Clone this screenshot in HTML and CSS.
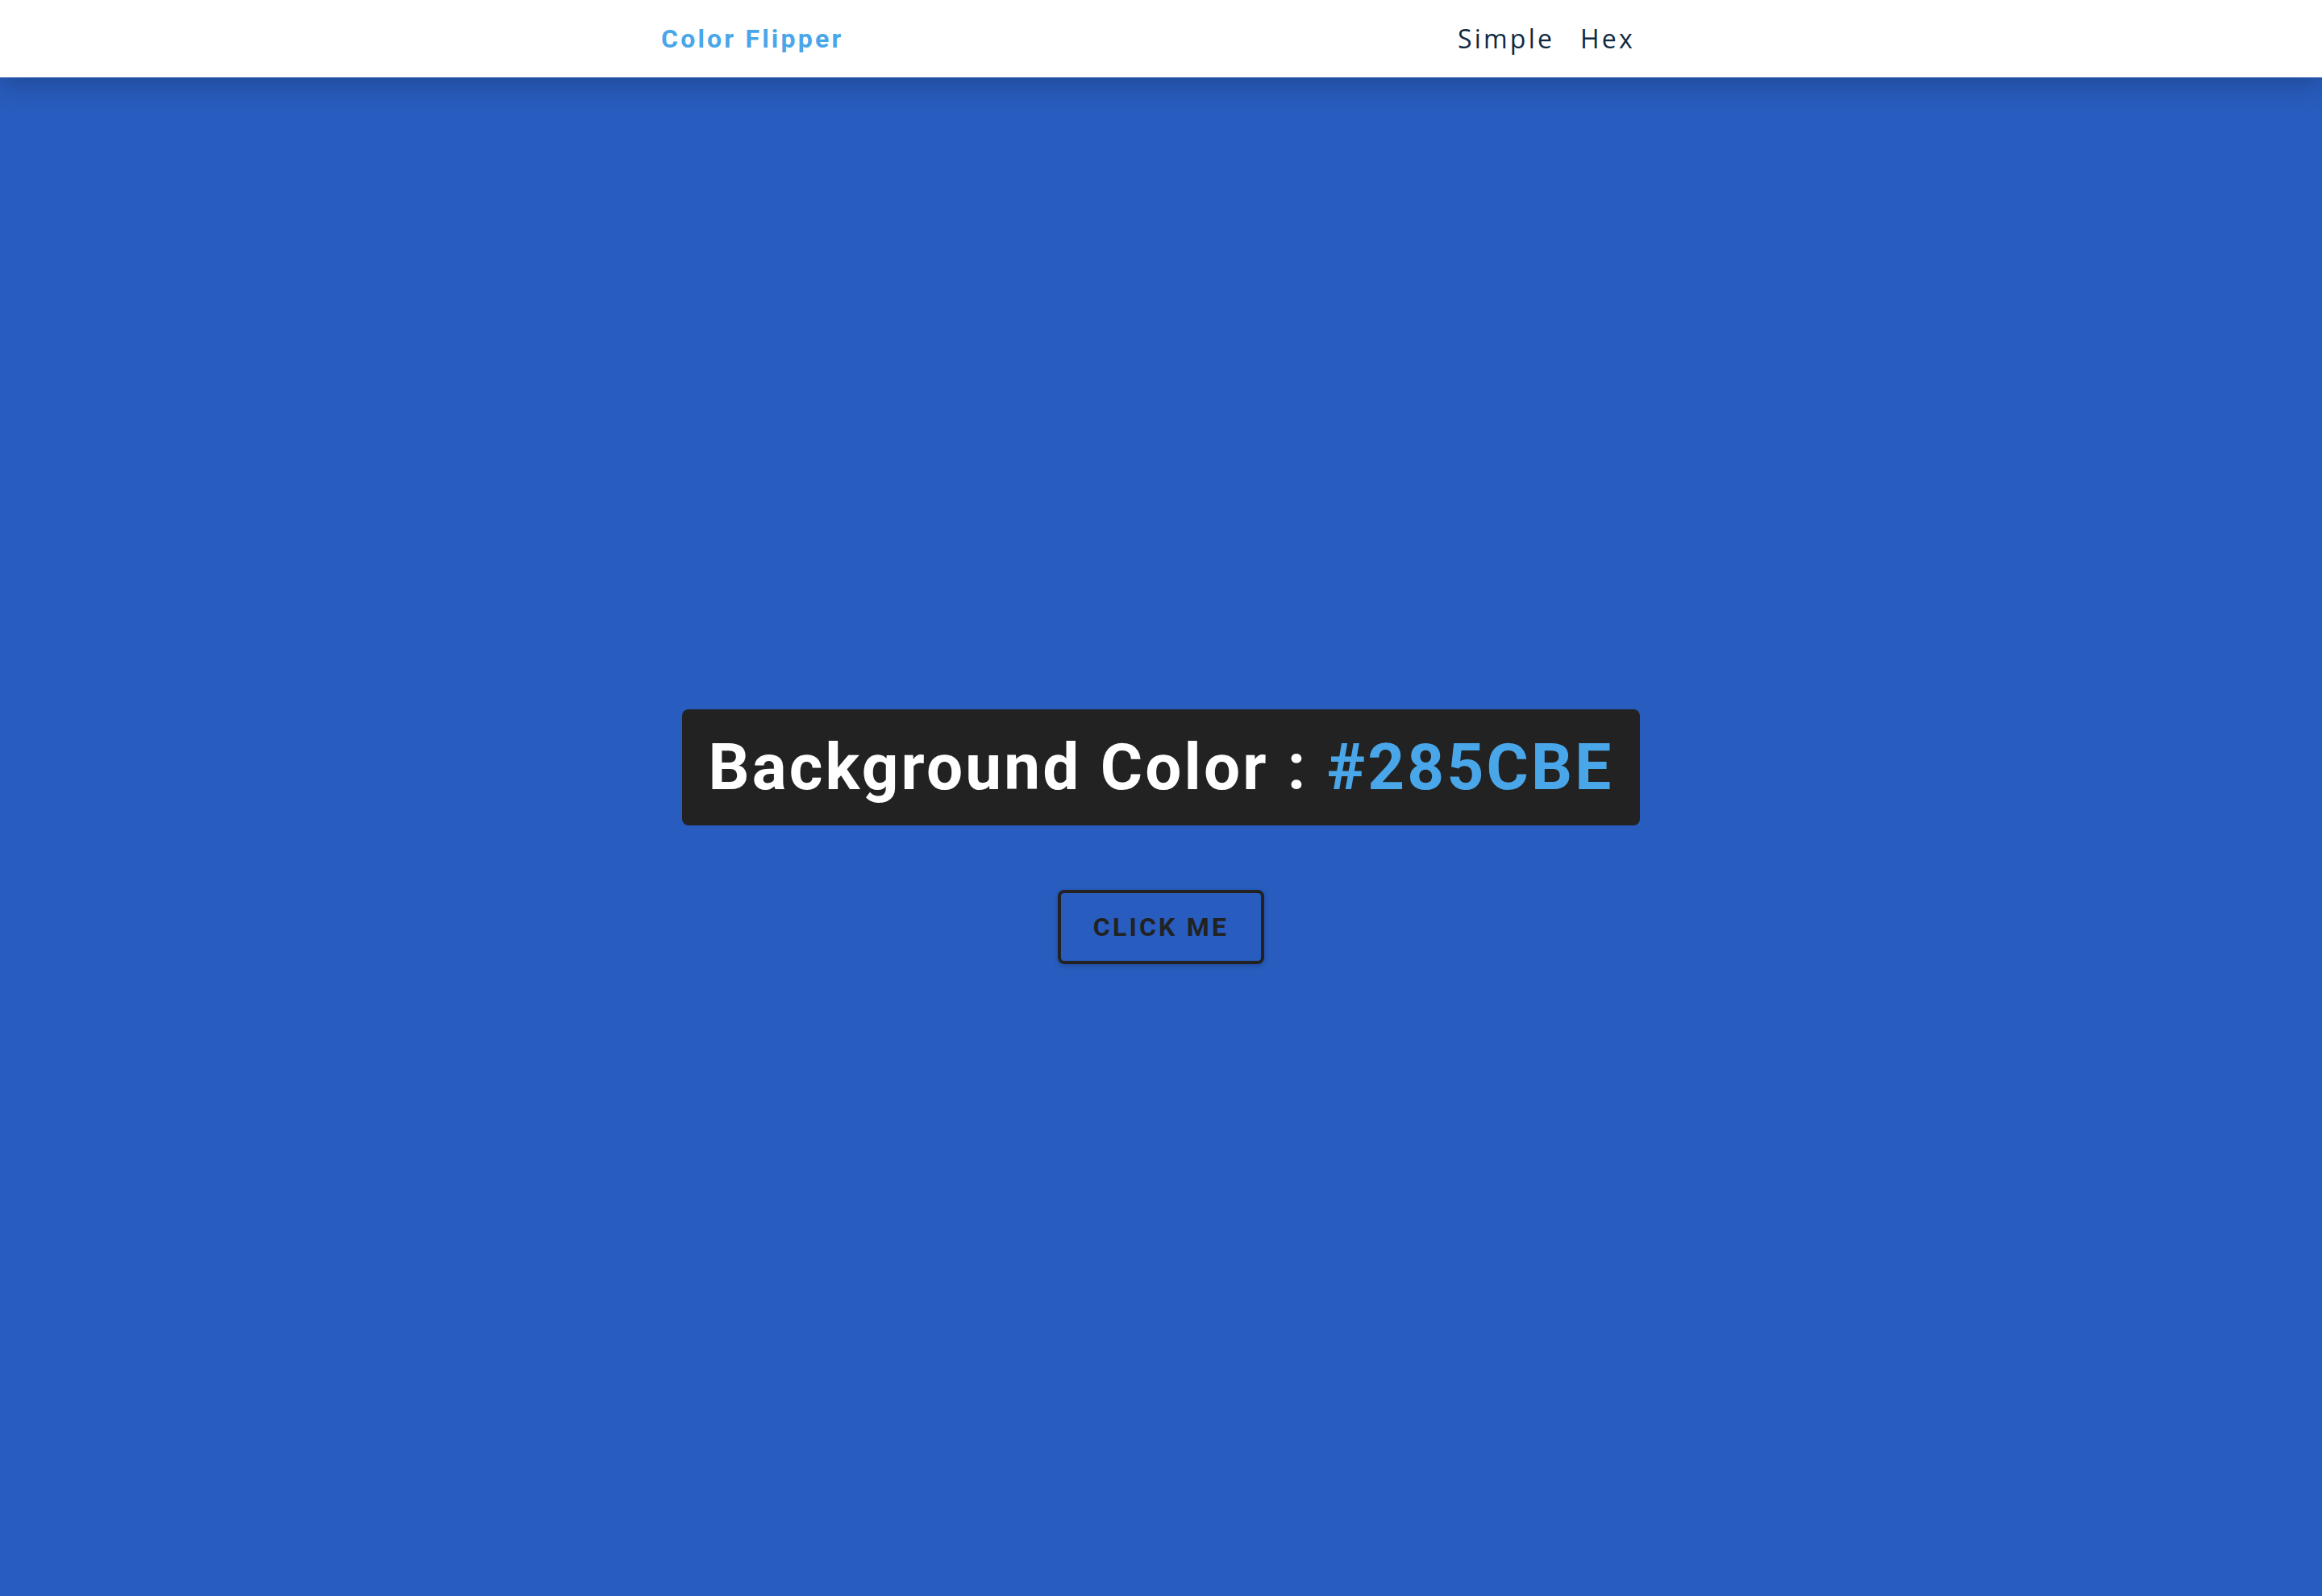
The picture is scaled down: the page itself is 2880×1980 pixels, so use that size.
FILE: index.html
```html
<!DOCTYPE html>
<html lang="en">
<head>
<meta charset="utf-8">
<title>Color Flipper</title>
<link rel="stylesheet" href="styles.css">
</head>
<body>
<nav class="nav">
  <div class="nav-center">
    <h4 class="logo">Color Flipper</h4>
    <ul class="nav-links">
      <li><a href="#">Simple</a></li>
      <li><a href="#">Hex</a></li>
    </ul>
  </div>
</nav>
<main class="main">
  <div class="container">
    <h2 class="title">Background Color : <span class="color">#285CBE</span></h2>
    <button class="btn-hero" type="button">click me</button>
  </div>
</main>
</body>
</html>
```
FILE: styles.css
```css
* { box-sizing: border-box; margin: 0; padding: 0; }
html, body { height: 100%; }
body {
  font-family: "Open Sans", sans-serif;
  background: #285cbe;
  color: #102a42;
  font-size: 32px;
  line-height: 1.5;
}
.nav {
  background: #fff;
  height: 96px;
  display: grid;
  align-items: center;
  box-shadow: 0 10px 30px rgba(0, 0, 0, 0.2);
  position: relative;
  z-index: 1;
}
.nav-center {
  width: 90vw;
  max-width: 1240px;
  margin: 0 auto;
  display: flex;
  justify-content: space-between;
  align-items: center;
}
.logo {
  font-family: Roboto, sans-serif;
  font-weight: 700;
  font-size: 32px;
  line-height: 1;
  letter-spacing: 3.2px;
  color: #49a6e9;
}
.nav-links { display: flex; list-style: none; margin-right: 16px; }
.nav-links a {
  margin: 0 16px;
  font-size: 32px;
  color: #102a42;
  letter-spacing: 3.2px;
  text-decoration: none;
}
.main {
  min-height: calc(100vh - 96px);
  display: grid;
  place-items: center;
}
.container { text-align: center; }
.title {
  font-family: Roboto, sans-serif;
  font-weight: 700;
  font-size: 80px;
  line-height: 1;
  letter-spacing: 3.2px;
  background: #222;
  color: #fff;
  padding: 32px;
  border-radius: 8px;
  margin-bottom: 80px;
}
.color { color: #49a6e9; }
.btn-hero {
  font-family: Roboto, sans-serif;
  text-transform: uppercase;
  background: transparent;
  color: #222;
  letter-spacing: 3.2px;
  font-weight: 700;
  font-size: 32px;
  line-height: 36px;
  border: 4px solid #222;
  box-shadow: 0 2px 6px rgba(0, 0, 0, 0.2);
  border-radius: 8px;
  padding: 24px 40px;
  cursor: pointer;
}
```
